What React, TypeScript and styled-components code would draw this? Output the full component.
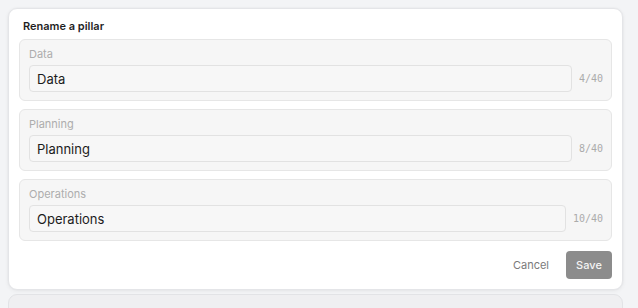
import React from "react";
import styled, { createGlobalStyle } from "styled-components";

const Global = createGlobalStyle`
  html, body { margin: 0; padding: 0; background: #f3f4f6; }
  body { font-family: Inter, "Noto Sans", sans-serif; -webkit-font-smoothing: antialiased; }
`;

const Page = styled.div`
  padding: 8px 15px 0 8px;
  display: flex;
  flex-direction: column;
  gap: 4px;
  height: 308px;
  box-sizing: border-box;
  overflow: hidden;
`;

const Card = styled.div`
  background: #ffffff;
  border: 1px solid #e4e5e8;
  border-radius: 9px;
  box-shadow: 0 1px 4px rgba(0, 0, 0, 0.06), 0 0 0 1px rgba(0, 0, 0, 0.01);
  padding: 10px;
  display: flex;
  flex-direction: column;
  flex-shrink: 0;
`;

const GhostCard = styled.div`
  background: #efeff1;
  border: 1px solid #e2e3e6;
  border-radius: 9px;
  height: 40px;
  flex-shrink: 0;
`;

const Title = styled.div`
  font-size: 11px;
  font-weight: 600;
  line-height: 14px;
  color: #1f1f1f;
  padding-left: 4px;
  margin-bottom: 6px;
`;

const Groups = styled.div`
  display: flex;
  flex-direction: column;
  gap: 8px;
`;

const Group = styled.div`
  background: #f6f6f6;
  border: 1px solid #e6e6e6;
  border-radius: 6px;
  padding: 7px 8px 8px 9px;
  display: flex;
  flex-direction: column;
  gap: 4px;
`;

const Label = styled.div`
  font-size: 11px;
  line-height: 14px;
  color: #adadad;
`;

const Row = styled.div`
  display: flex;
  align-items: center;
  gap: 7px;
`;

const Input = styled.input`
  flex: 1;
  min-width: 0;
  height: 27px;
  box-sizing: border-box;
  border: 1px solid #e2e2e2;
  border-radius: 4px;
  background: #f7f7f7;
  padding: 0 7px;
  font-family: Inter, "Noto Sans", sans-serif;
  font-size: 13px;
  color: #1c1c1c;
  outline: none;
`;

const Counter = styled.span`
  font-family: "DejaVu Sans Mono", monospace;
  font-size: 10px;
  color: #ababab;
  white-space: nowrap;
`;

const Footer = styled.div`
  display: flex;
  justify-content: flex-end;
  align-items: center;
  gap: 17px;
  margin-top: 10px;
`;

const TextButton = styled.button`
  background: none;
  border: none;
  padding: 0;
  font-family: Inter, "Noto Sans", sans-serif;
  font-size: 11px;
  color: #7a7a7a;
`;

const PrimaryButton = styled.button`
  width: 46px;
  height: 28px;
  border: none;
  border-radius: 4px;
  background: #8c8c8c;
  color: #f4f4f4;
  font-family: Inter, "Noto Sans", sans-serif;
  font-size: 11px;
  font-weight: 500;
`;

const pillars = ["Data", "Planning", "Operations"];

export default function App() {
  return (
    <>
      <Global />
      <Page>
        <Card>
          <Title>Rename a pillar</Title>
          <Groups>
            {pillars.map((p) => (
              <Group key={p}>
                <Label>{p}</Label>
                <Row>
                  <Input defaultValue={p} />
                  <Counter>{p.length}/40</Counter>
                </Row>
              </Group>
            ))}
          </Groups>
          <Footer>
            <TextButton>Cancel</TextButton>
            <PrimaryButton>Save</PrimaryButton>
          </Footer>
        </Card>
        <GhostCard />
      </Page>
    </>
  );
}
